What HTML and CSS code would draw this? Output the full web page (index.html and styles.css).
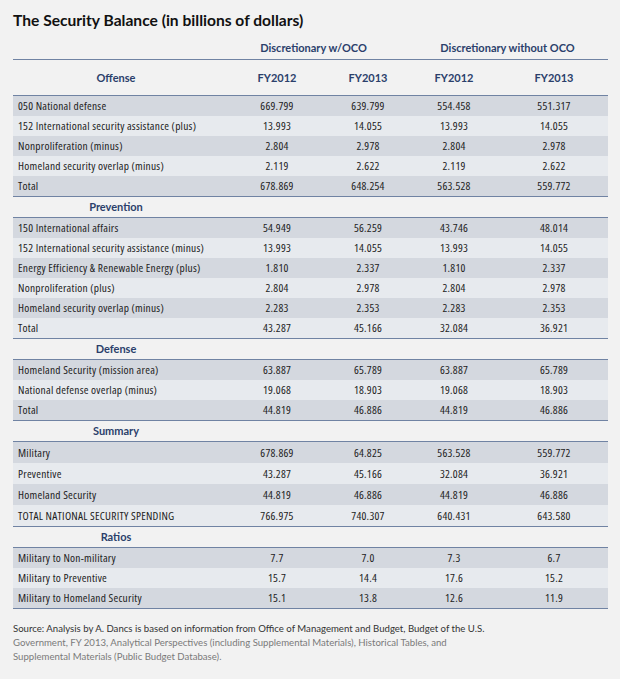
FILE: index.html
```html
<!DOCTYPE html>
<html>
<head>
<meta charset="utf-8">
<link rel="stylesheet" href="styles.css">
</head>
<body>
<div class="page">
  <h1 class="title">The Security Balance (in billions of dollars)</h1>
  <div class="table">
    <div class="row group">
      <div></div>
      <div class="g1">Discretionary w/OCO</div>
      <div class="g2">Discretionary without OCO</div>
    </div>
    <div class="row colhead">
      <div class="sec">Offense</div>
      <div>FY2012</div><div>FY2013</div><div class="c3">FY2012</div><div>FY2013</div>
    </div>
    <div class="body">
      <div class="row data"><div class="lbl">050 National defense</div><div>669.799</div><div>639.799</div><div class="c3">554.458</div><div>551.317</div></div>
      <div class="row data"><div class="lbl">152 International security assistance (plus)</div><div>13.993</div><div>14.055</div><div class="c3">13.993</div><div>14.055</div></div>
      <div class="row data"><div class="lbl">Nonproliferation (minus)</div><div>2.804</div><div>2.978</div><div class="c3">2.804</div><div>2.978</div></div>
      <div class="row data"><div class="lbl">Homeland security overlap (minus)</div><div>2.119</div><div>2.622</div><div class="c3">2.119</div><div>2.622</div></div>
      <div class="row data"><div class="lbl">Total</div><div>678.869</div><div>648.254</div><div class="c3">563.528</div><div>559.772</div></div>
    </div>
    <div class="row sechead"><div class="sec">Prevention</div></div>
    <div class="body">
      <div class="row data"><div class="lbl">150 International affairs</div><div>54.949</div><div>56.259</div><div class="c3">43.746</div><div>48.014</div></div>
      <div class="row data"><div class="lbl">152 International security assistance (minus)</div><div>13.993</div><div>14.055</div><div class="c3">13.993</div><div>14.055</div></div>
      <div class="row data"><div class="lbl">Energy Efficiency &amp; Renewable Energy (plus)</div><div>1.810</div><div>2.337</div><div class="c3">1.810</div><div>2.337</div></div>
      <div class="row data"><div class="lbl">Nonproliferation (plus)</div><div>2.804</div><div>2.978</div><div class="c3">2.804</div><div>2.978</div></div>
      <div class="row data"><div class="lbl">Homeland security overlap (minus)</div><div>2.283</div><div>2.353</div><div class="c3">2.283</div><div>2.353</div></div>
      <div class="row data"><div class="lbl">Total</div><div>43.287</div><div>45.166</div><div class="c3">32.084</div><div>36.921</div></div>
    </div>
    <div class="row sechead"><div class="sec">Defense</div></div>
    <div class="body">
      <div class="row data"><div class="lbl">Homeland Security (mission area)</div><div>63.887</div><div>65.789</div><div class="c3">63.887</div><div>65.789</div></div>
      <div class="row data"><div class="lbl">National defense overlap (minus)</div><div>19.068</div><div>18.903</div><div class="c3">19.068</div><div>18.903</div></div>
      <div class="row data"><div class="lbl">Total</div><div>44.819</div><div>46.886</div><div class="c3">44.819</div><div>46.886</div></div>
    </div>
    <div class="row sechead"><div class="sec">Summary</div></div>
    <div class="body summary">
      <div class="row data"><div class="lbl">Military</div><div>678.869</div><div>64.825</div><div class="c3">563.528</div><div>559.772</div></div>
      <div class="row data"><div class="lbl">Preventive</div><div>43.287</div><div>45.166</div><div class="c3">32.084</div><div>36.921</div></div>
      <div class="row data"><div class="lbl">Homeland Security</div><div>44.819</div><div>46.886</div><div class="c3">44.819</div><div>46.886</div></div>
      <div class="row data"><div class="lbl">TOTAL NATIONAL SECURITY SPENDING</div><div>766.975</div><div>740.307</div><div class="c3">640.431</div><div>643.580</div></div>
    </div>
    <div class="row sechead"><div class="sec">Ratios</div></div>
    <div class="body">
      <div class="row data"><div class="lbl">Military to Non-military</div><div>7.7</div><div>7.0</div><div class="c3">7.3</div><div>6.7</div></div>
      <div class="row data"><div class="lbl">Military to Preventive</div><div>15.7</div><div>14.4</div><div class="c3">17.6</div><div>15.2</div></div>
      <div class="row data"><div class="lbl">Military to Homeland Security</div><div>15.1</div><div>13.8</div><div class="c3">12.6</div><div>11.9</div></div>
    </div>
  </div>
  <p class="source"><span class="dark">Source: Analysis by A. Dancs is based on information from Office of Management and Budget, Budget of the U.S.</span><br>Government, FY 2013, Analytical Perspectives (including Supplemental Materials), Historical Tables, and<br>Supplemental Materials (Public Budget Database).</p>
</div>
</body>
</html>
```
FILE: styles.css
```css
html, body {
  margin: 0;
  padding: 0;
  background: #f2f2f2;
}
.page {
  padding: 0 12px 0 13px;
  font-family: Lato, "Open Sans", sans-serif;
  font-size: 11px;
  color: #1e1e1e;
}
.title {
  margin: 0;
  padding-top: 4px;
  height: 32px;
  line-height: 32px;
  font-size: 15.6px;
  font-weight: 700;
  color: #111;
}
.table {
  width: 595px;
}
.row {
  display: grid;
  grid-template-columns: 219px 90px 92px 86px 108px;
  text-align: center;
}
.c3 {
  padding-right: 6px;
}
.group {
  height: 23px;
  line-height: 23px;
  border-bottom: 1px solid #7083a3;
  color: #2b3f6b;
  font-weight: 700;
}
.group .g1 {
  grid-column: 2 / span 2;
  padding-right: 19px;
}
.group .g2 {
  grid-column: 4 / span 2;
  padding-right: 7px;
}
.colhead {
  height: 35px;
  line-height: 35px;
  border-bottom: 1px solid #7083a3;
  color: #2b3f6b;
  font-weight: 700;
}
.sec {
  padding-right: 13px;
  color: #2b3f6b;
  font-weight: 700;
}
.sechead {
  height: 20px;
  line-height: 20px;
  border-bottom: 1px solid #7083a3;
}
.body {
  border-bottom: 1px solid #7083a3;
}
.data {
  height: 20px;
  line-height: 20px;
  font-family: "Open Sans", Lato, sans-serif;
  font-size: 11.4px;
  font-stretch: 75%;
  letter-spacing: 0.25px;
  color: #222;
}
.summary .data {
  height: 21px;
  line-height: 21px;
}
.data:nth-child(odd) {
  background: #d4d8df;
}
.data:nth-child(even) {
  background: #e7eaee;
}
.lbl {
  text-align: left;
  padding-left: 5px;
}
.source {
  margin: 13px 0 0;
  font-size: 9.6px;
  line-height: 14px;
  color: #7a7a7a;
}
.source .dark {
  color: #333;
}
```
